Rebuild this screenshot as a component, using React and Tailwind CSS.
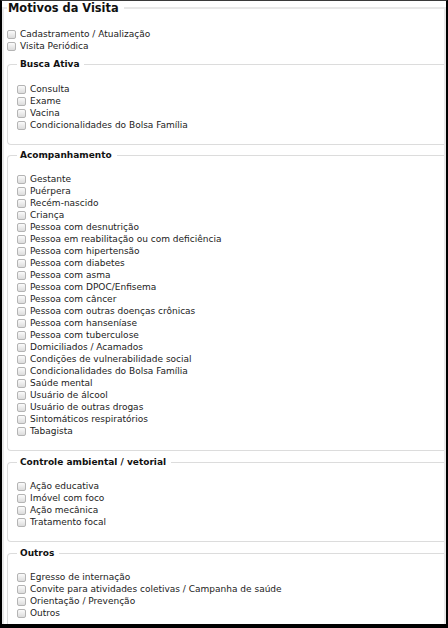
const motivos = ["Cadastramento / Atualização", "Visita Periódica"];

const grupos = [
  {
    titulo: "Busca Ativa",
    cls: "mt-[5px] pt-[12px]",
    itens: ["Consulta", "Exame", "Vacina", "Condicionalidades do Bolsa Família"],
  },
  {
    titulo: "Acompanhamento",
    cls: "mt-[3px] pt-[11px]",
    itens: [
      "Gestante",
      "Puérpera",
      "Recém-nascido",
      "Criança",
      "Pessoa com desnutrição",
      "Pessoa em reabilitação ou com deficiência",
      "Pessoa com hipertensão",
      "Pessoa com diabetes",
      "Pessoa com asma",
      "Pessoa com DPOC/Enfisema",
      "Pessoa com câncer",
      "Pessoa com outras doenças crônicas",
      "Pessoa com hanseníase",
      "Pessoa com tuberculose",
      "Domiciliados / Acamados",
      "Condições de vulnerabilidade social",
      "Condicionalidades do Bolsa Família",
      "Saúde mental",
      "Usuário de álcool",
      "Usuário de outras drogas",
      "Sintomáticos respiratórios",
      "Tabagista",
    ],
  },
  {
    titulo: "Controle ambiental / vetorial",
    cls: "mt-[4px] pt-[11px]",
    itens: ["Ação educativa", "Imóvel com foco", "Ação mecânica", "Tratamento focal"],
  },
  {
    titulo: "Outros",
    cls: "mt-[4px] pt-[11px]",
    itens: [
      "Egresso de internação",
      "Convite para atividades coletivas / Campanha de saúde",
      "Orientação / Prevenção",
      "Outros",
    ],
  },
];

function Item({ label }) {
  return (
    <label className="flex items-center gap-[4px] h-[12px] leading-[12px] whitespace-nowrap">
      <span className="inline-block w-[9px] h-[9px] shrink-0 rounded-[2px] border border-[#b4b4b4] bg-gradient-to-b from-[#fbfbfb] to-[#dcdcdc]" />
      <span>{label}</span>
    </label>
  );
}

export default function App() {
  return (
    <div
      className="w-[448px] h-[628px] overflow-hidden bg-white border-t border-t-[#3a3a3a] border-l-2 border-r-2 border-b-4 border-black text-[9px] text-[#222]"
      style={{ fontFamily: '"DejaVu Sans", Verdana, sans-serif' }}
    >
      {/* Motivos da Visita */}
      <fieldset className="border-2 border-[#e8e8e8] pl-[3px] pt-[12px] -mt-px">
        <legend className="relative pl-[1px] pr-[5px] bg-white text-[11.4px] leading-[16px] font-bold text-[#111]">
          Motivos da Visita
        </legend>
        {motivos.map((m) => (
          <Item key={m} label={m} />
        ))}

        {grupos.map((g) => (
          <fieldset
            key={g.titulo}
            className={
              "border border-r-0 border-[#dcdcdc] rounded-l-[4px] pl-[9px] pb-[13px] " + g.cls
            }
          >
            <legend className="pl-[3px] pr-[5px] text-[9px] leading-[14px] font-bold text-[#111]">
              {g.titulo}
            </legend>
            {g.itens.map((it) => (
              <Item key={it} label={it} />
            ))}
          </fieldset>
        ))}
      </fieldset>
    </div>
  );
}
